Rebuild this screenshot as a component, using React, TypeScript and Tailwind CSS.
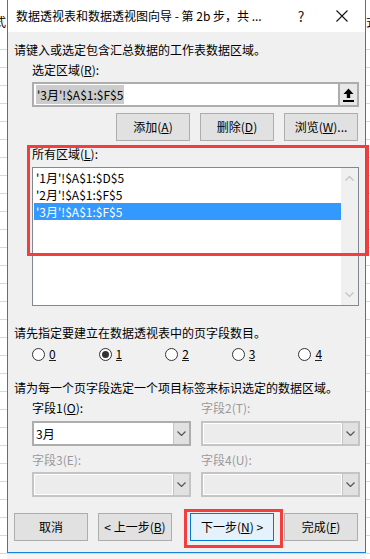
import type { ReactNode } from 'react'

const rows = Array.from({ length: 32 })

function Sheet({ width, offset }: { width: string; offset: string }) {
  return (
    <div className={`${width} h-full overflow-hidden bg-white flex flex-col`}>
      <div className={`h-[32px] shrink-0 text-[12px] leading-[44px] whitespace-nowrap ${offset}`}>式</div>
      {rows.map((_, i) => (
        <div key={i} className="h-[18px] shrink-0 border-b border-[#d8d8d8]" />
      ))}
    </div>
  )
}

function Btn({ children, className = '' }: { children: ReactNode; className?: string }) {
  return (
    <div
      className={`h-[28px] flex items-center justify-center border border-[#adadad] bg-[#e1e1e1] text-[12px] ${className}`}
    >
      {children}
    </div>
  )
}

function Chevron({ color = '#555555', up = false }: { color?: string; up?: boolean }) {
  return (
    <svg width="9" height="5" viewBox="0 0 9 5">
      <path d={up ? 'M0.5 4.5 L4.5 0.5 L8.5 4.5' : 'M0.5 0.5 L4.5 4.5 L8.5 0.5'} fill="none" stroke={color} strokeWidth="1.2" />
    </svg>
  )
}

function Combo({ value, disabled = false }: { value?: string; disabled?: boolean }) {
  return (
    <div
      className={`w-[159px] h-[25px] flex border-2 ${disabled ? 'border-[#c4c4c4] bg-[#ececec]' : 'border-[#adadad] bg-white'}`}
    >
      <div className={`flex-1 pl-[2px] leading-[21px] text-[12px] ${disabled ? 'border border-white' : ''}`}>{value}</div>
      <div className="w-[16px] bg-[#e1e1e1] border-l border-[#c4c4c4] flex items-center justify-center">
        <Chevron />
      </div>
    </div>
  )
}

function Radio({ label, checked = false }: { label: string; checked?: boolean }) {
  return (
    <div className="w-[75px] flex items-center">
      <div className="w-[13px] h-[13px] rounded-full border border-[#333333] bg-white flex items-center justify-center">
        {checked && <div className="w-[7px] h-[7px] rounded-full bg-[#333333]" />}
      </div>
      <u className="ml-[4px] no-underline border-b border-[#222] leading-[13px]">{label}</u>
    </div>
  )
}

export default function App() {
  return (
    <div className="relative w-[370px] h-[559px] overflow-hidden flex bg-white text-[#000] font-['Noto_Sans_CJK_SC',sans-serif]">
      <Sheet width="w-[7px]" offset="-ml-[6px]" />

      <div className="w-[359px] h-full flex flex-col">
        <div className="h-[553px] flex flex-col border-l border-r border-b border-[#1883d7] bg-[#f0f0f0]">
          {/* title bar */}
          <div className="h-[32px] bg-white flex items-center pl-[8px] text-[12px]">
            <div className="flex-1 whitespace-nowrap">数据透视表和数据透视图向导 - 第 2b 步，共 ...</div>
            <div className="w-[20px] mr-[8px] text-center text-[14px] text-[#222]">?</div>
            <div className="w-[46px] h-full flex items-center justify-center">
              <svg width="12" height="12" viewBox="0 0 12 12">
                <path d="M0.5 0.5 L11.5 11.5 M11.5 0.5 L0.5 11.5" stroke="#111" strokeWidth="1.1" />
              </svg>
            </div>
          </div>

          <div className="flex flex-col pl-[6px] text-[12px] leading-[16px]">
            <div className="mt-[10px] h-[16px]">请键入或选定包含汇总数据的工作表数据区域。</div>
            <div className="mt-[4px] h-[16px] ml-[18px]">
              选定区域(<u>R</u>):
            </div>

            <div className="mt-[4px] ml-[18px] w-[327px] h-[25px] flex border-2 border-[#adadad] bg-white">
              <div className="flex-1 flex items-center pl-[2px]">
                <span className="bg-[#cccccc] px-[1px] leading-[19px]">'3月'!$A$1:$F$5</span>
              </div>
              <div className="w-[19px] border-l-2 border-[#adadad] bg-[#e8e8e8] flex items-center justify-center">
                <svg width="11" height="14" viewBox="0 0 11 14">
                  <path d="M5.5 0.5 L10.5 6 L7.2 6 L7.2 10 L3.8 10 L3.8 6 L0.5 6 Z" fill="#000" />
                  <rect x="0" y="12" width="11" height="2" fill="#000" />
                </svg>
              </div>
            </div>

            <div className="mt-[6px] ml-[102px] flex gap-[10px]">
              <Btn className="w-[74px]">
                添加(<u>A</u>)
              </Btn>
              <Btn className="w-[74px]">
                删除(<u>D</u>)
              </Btn>
              <Btn className="w-[74px]">
                浏览(<u>W</u>)...
              </Btn>
            </div>

            <div className="mt-[5px] h-[16px] ml-[18px]">
              所有区域(<u>L</u>):
            </div>

            <div className="mt-[5px] ml-[18px] w-[327px] h-[139px] border border-[#828790] bg-white flex">
              <div className="flex-1 pt-[1px] pl-[1px]">
                <div className="h-[17px] leading-[17px] pl-[2px]">'1月'!$A$1:$D$5</div>
                <div className="h-[17px] leading-[17px] pl-[2px]">'2月'!$A$1:$F$5</div>
                <div className="h-[17px] leading-[17px] pl-[2px] bg-[#3399ff] text-white">'3月'!$A$1:$F$5</div>
              </div>
              <div className="w-[17px] bg-[#f0f0f0] flex flex-col justify-between items-center py-[8px]">
                <Chevron up color="#c2c2c2" />
                <Chevron color="#c2c2c2" />
              </div>
            </div>

            <div className="mt-[19px] h-[16px]">请先指定要建立在数据透视表中的页字段数目。</div>
            <div className="mt-[5px] h-[16px] ml-[18px] flex items-center">
              <Radio label="0" />
              <Radio label="1" checked />
              <Radio label="2" />
              <Radio label="3" />
              <Radio label="4" />
            </div>

            <div className="mt-[18px] h-[16px]">请为每一个页字段选定一个项目标签来标识选定的数据区域。</div>
            <div className="mt-[4px] h-[16px] ml-[18px] flex gap-[10px]">
              <div className="w-[159px]">
                字段1(<u>O</u>):
              </div>
              <div className="w-[159px] text-[#9a9a9a]">字段2(T):</div>
            </div>
            <div className="mt-[5px] ml-[18px] flex gap-[10px]">
              <Combo value="3月" />
              <Combo disabled />
            </div>
            <div className="mt-[6px] h-[16px] ml-[18px] flex gap-[10px] text-[#9a9a9a]">
              <div className="w-[159px]">字段3(E):</div>
              <div className="w-[159px]">字段4(U):</div>
            </div>
            <div className="mt-[4px] ml-[18px] flex gap-[10px]">
              <Combo disabled />
              <Combo disabled />
            </div>

            <div className="mt-[16px] flex">
              <Btn className="w-[74px]">取消</Btn>
              <Btn className="w-[74px] ml-[10px]">
                &lt; 上一步(<u>B</u>)
              </Btn>
              <Btn className="w-[84px] ml-[18px] !border-[#0078d7] !bg-[#e5f1fb]">
                下一步(<u>N</u>) &gt;
              </Btn>
              <Btn className="w-[74px] ml-[10px]">
                完成(<u>F</u>)
              </Btn>
            </div>
          </div>
        </div>
        <div className="flex-1 bg-[#f3f3f3] border-t border-[#d8d8d8]" />
      </div>

      <Sheet width="w-[4px]" offset="ml-0" />

      {/* highlight boxes */}
      <div className="absolute left-[27px] top-[145px] w-[342px] h-[111px] border-[3px] border-[#f43d3d]" />
      <div className="absolute left-[184px] top-[509px] w-[99px] h-[39px] border-[3px] border-[#f43d3d]" />
    </div>
  )
}
